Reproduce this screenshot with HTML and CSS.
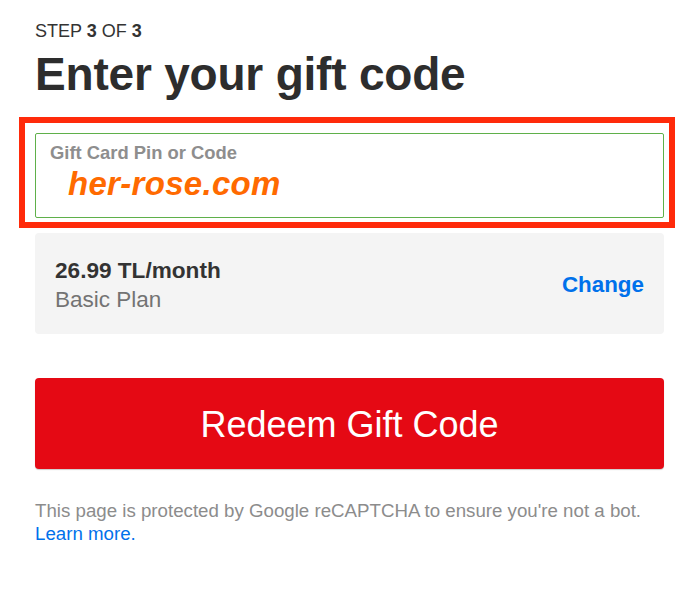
FILE: index.html
```html
<!DOCTYPE html>
<html>
<head>
<meta charset="utf-8">
<link rel="stylesheet" href="styles.css">
</head>
<body>
<main class="page">
  <div class="step">STEP <b>3</b> OF <b>3</b></div>
  <h1 class="title">Enter your gift code</h1>
  <div class="field">
    <label class="field-label">Gift Card Pin or Code</label>
    <div class="field-value">her-rose.com</div>
    <div class="highlight"></div>
  </div>
  <div class="plan">
    <div class="plan-info">
      <div class="plan-price">26.99 TL/month</div>
      <div class="plan-name">Basic Plan</div>
    </div>
    <a class="plan-change">Change</a>
  </div>
  <button class="redeem">Redeem Gift Code</button>
  <p class="captcha">This page is protected by Google reCAPTCHA to ensure you're not a bot.<br><a class="learn">Learn more.</a></p>
</main>
</body>
</html>
```

FILE: styles.css
```css
html, body {
  margin: 0;
  padding: 0;
  background: #fff;
}
body {
  font-family: "Liberation Sans", Arial, sans-serif;
  color: #333;
}
.page {
  padding: 20px 36px 0 35px;
}
.step {
  font-size: 18px;
  line-height: 22px;
  color: #333;
}
.step b {
  font-weight: bold;
}
.title {
  margin: 5px 0 0;
  font-size: 46px;
  line-height: 54px;
  font-weight: bold;
  color: #2d2d2d;
  letter-spacing: -0.2px;
}
.field {
  position: relative;
  margin-top: 32px;
  height: 85px;
  box-sizing: border-box;
  border: 1px solid #5fb04a;
  border-radius: 2px;
  padding: 8px 14px 0;
}
.field-label {
  display: block;
  font-size: 18.4px;
  line-height: 22px;
  font-weight: bold;
  color: #8e8e8e;
}
.field-value {
  margin: 2px 0 0 18px;
  font-size: 33px;
  line-height: 36px;
  font-weight: bold;
  font-style: italic;
  color: #ff6a00;
  letter-spacing: 0.3px;
}
.highlight {
  position: absolute;
  left: -17px;
  top: -17px;
  right: -12px;
  bottom: -11px;
  border: 6px solid #ff2a0a;
  pointer-events: none;
}
.plan {
  margin-top: 15px;
  background: #f4f4f4;
  border-radius: 4px;
  padding: 23px 20px 20px 20px;
  display: flex;
  align-items: center;
  justify-content: space-between;
}
.plan-price {
  font-size: 22.6px;
  line-height: 29px;
  font-weight: bold;
  color: #333;
}
.plan-name {
  font-size: 22.5px;
  line-height: 29px;
  color: #737373;
}
.plan-change {
  font-size: 22.4px;
  line-height: 29px;
  font-weight: bold;
  color: #0071eb;
  margin-top: -2px;
}
.redeem {
  display: block;
  width: 100%;
  height: 91px;
  margin-top: 44px;
  padding-top: 4px;
  border: none;
  border-radius: 4px;
  background: #e50914;
  color: #fff;
  font-family: "Liberation Sans", Arial, sans-serif;
  font-size: 36px;
  box-shadow: 0 1px 1px rgba(0,0,0,0.2);
}
.captcha {
  margin: 30px 0 0;
  font-size: 18.7px;
  line-height: 23px;
  color: #8c8c8c;
}
.learn {
  color: #0071eb;
}
```
